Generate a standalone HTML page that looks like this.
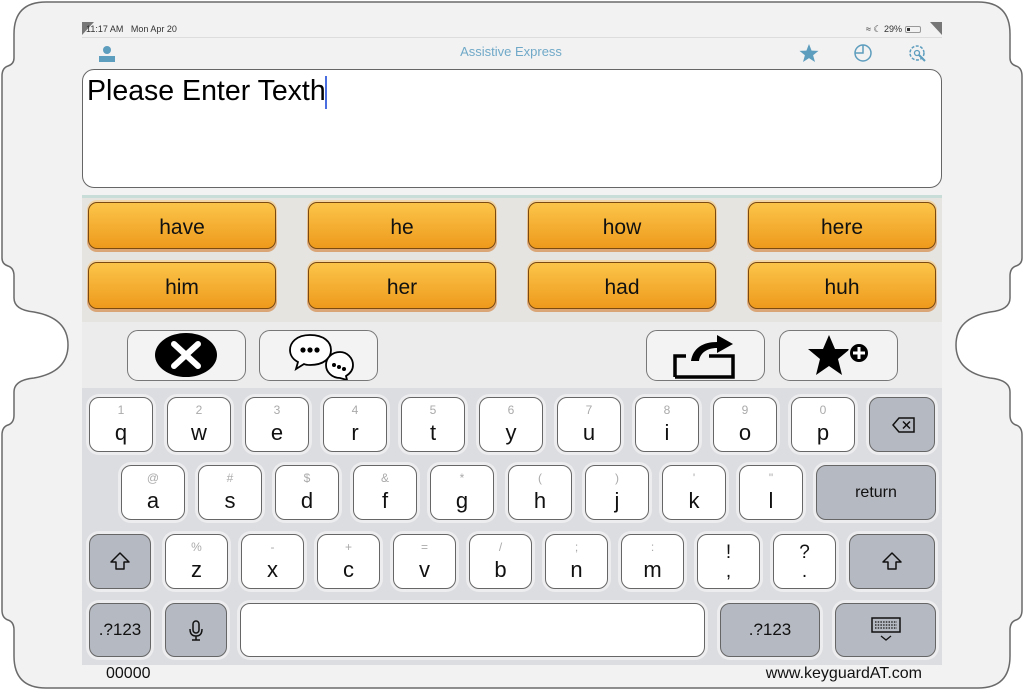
<!DOCTYPE html>
<html><head><meta charset="utf-8"><style>
*{margin:0;padding:0;box-sizing:border-box}
body{width:1024px;height:690px;background:#fff;position:relative;overflow:hidden;font-family:"Liberation Sans",sans-serif}
.a{position:absolute}
.wb{position:absolute;height:52px;width:190px;border-radius:10px;background:linear-gradient(#f3d8a8,#d9a476);}
.wb div{position:absolute;left:1px;top:2px;right:1px;height:47px;border:1.3px solid #7a4a10;border-radius:9px;background:linear-gradient(#fbc54a,#ee9a1c);font-size:21px;text-align:center;line-height:49px;color:#111}
.tb{position:absolute;top:330px;height:51px;width:119px;border:1.3px solid #777;border-radius:11px;background:#f3f3f4}
.k{position:absolute;border:1.3px solid #666;border-radius:10px;background:#fff;box-shadow:0 0 0 3px #ededef;text-align:center;color:#111}
.k .s{position:absolute;left:0;right:0;top:5px;font-size:12px;color:#aaa}
.k .m{position:absolute;left:0;right:0;top:22px;font-size:22px}
.g{background:#b5b9c1}
</style></head><body>
<svg class="a" style="left:0;top:0" width="1024" height="690">
<path d="M46 2 H978 Q1010 2 1010 34 V58 Q1010 64 1016 66 Q1022 68 1022 76 V258 Q1022 264 1016 266 Q1010 268 1010 276 V298 Q1010 310 990 312 Q956 318 956 345 Q956 372 990 378 Q1010 380 1010 392 V415 Q1010 423 1016 425 Q1022 427 1022 435 V610 Q1022 618 1016 620 Q1010 622 1010 630 V656 Q1010 688 978 688 H46 Q14 688 14 656 V630 Q14 622 8 620 Q2 618 2 610 V435 Q2 427 8 425 Q14 423 14 415 V392 Q14 380 34 378 Q68 372 68 345 Q68 318 34 312 Q14 310 14 298 V276 Q14 268 8 266 Q2 264 2 258 V76 Q2 68 8 66 Q14 64 14 58 V34 Q14 2 46 2 Z" fill="#f2f2f2" stroke="#6a6a6a" stroke-width="1.5"/>
<path d="M82 22 H94 L82 35 Z" fill="#777"/><path d="M942 22 H930 L942 35 Z" fill="#777"/>
<path d="M82 665 V652 L95 665 Z" fill="#888"/><path d="M942 665 V652 L929 665 Z" fill="#888"/>
</svg>
<div class="a" style="left:86px;top:24px;font-size:9px;color:#333">11:17 AM&nbsp;&nbsp; Mon Apr 20</div>
<div class="a" style="left:866px;top:24px;font-size:9px;color:#333">&#8776; ☾ 29% <span style="display:inline-block;width:16px;height:7px;border:1px solid #999;border-radius:2px;vertical-align:-1px;position:relative"><span style="position:absolute;left:1px;top:1px;width:3px;height:3px;background:#333"></span></span></div>
<div class="a" style="left:82px;top:37px;width:860px;height:1px;background:#ddd"></div>
<svg class="a" style="left:98px;top:44px" width="18" height="20"><circle cx="9" cy="6" r="4" fill="#5d9dbd"/><rect x="1" y="12" width="16" height="6" fill="#5d9dbd"/></svg>
<div class="a" style="left:0;width:1022px;top:44px;text-align:center;font-size:13px;color:#70a9c8">Assistive Express</div>
<svg class="a" style="left:798px;top:42px" width="130" height="24"><path d="M11 2 L13.6 8.6 L20.5 8.9 L15.1 13.2 L17 20 L11 16.1 L5 20 L6.9 13.2 L1.5 8.9 L8.4 8.6Z" fill="#5d9dbd"/><circle cx="65" cy="11" r="8" fill="none" stroke="#5d9dbd" stroke-width="1.5"/><path d="M65 3 V11 H57" fill="none" stroke="#5d9dbd" stroke-width="1.5"/><circle cx="119" cy="11" r="7" fill="none" stroke="#5d9dbd" stroke-width="1.5" stroke-dasharray="3 1.5"/><circle cx="119" cy="11" r="2.5" fill="none" stroke="#5d9dbd" stroke-width="1.3"/><path d="M121 13 L127 19" stroke="#5d9dbd" stroke-width="2"/></svg>
<div class="a" style="left:82px;top:69px;width:860px;height:119px;background:#fff;border:1.5px solid #666;border-radius:12px"></div>
<div class="a" style="left:87px;top:75px;font-size:28.5px;color:#000">Please Enter Texth</div>
<div class="a" style="left:325px;top:76px;width:1.5px;height:33px;background:#4a6ee0"></div>
<div class="a" style="left:82px;top:195px;width:860px;height:127px;background:#e5e4e0;border-top:3px solid #c8dcd8"></div>
<div class="wb" style="left:87px;top:200px"><div>have</div></div>
<div class="wb" style="left:307px;top:200px"><div>he</div></div>
<div class="wb" style="left:527px;top:200px"><div>how</div></div>
<div class="wb" style="left:747px;top:200px"><div>here</div></div>
<div class="wb" style="left:87px;top:260px"><div>him</div></div>
<div class="wb" style="left:307px;top:260px"><div>her</div></div>
<div class="wb" style="left:527px;top:260px"><div>had</div></div>
<div class="wb" style="left:747px;top:260px"><div>huh</div></div>
<div class="a" style="left:82px;top:322px;width:860px;height:66px;background:#ececed"></div>
<div class="tb" style="left:127px"><svg width="117" height="49"><ellipse cx="58" cy="24" rx="31" ry="22" fill="#000"/><path d="M46 13 L70 35 M70 13 L46 35" stroke="#fff" stroke-width="6" stroke-linecap="round"/></svg></div>
<div class="tb" style="left:259px"><svg width="117" height="49"><path d="M50 4 C36 4 30 12 30 19 C30 25 34 29 38 31 L36 38 L44 33 C46 34 48 34 50 34 C64 34 71 27 71 19 C71 11 64 4 50 4Z" fill="#fff" stroke="#000" stroke-width="1.8"/><circle cx="43" cy="19" r="2.6"/><circle cx="50" cy="19" r="2.6"/><circle cx="57" cy="19" r="2.6"/><path d="M80 21 C72 21 66 27 66 34 C66 41 72 47 80 47 L87 49 L86 45 C91 42 93 38 93 34 C93 27 87 21 80 21Z" fill="#fff" stroke="#000" stroke-width="1.8"/><circle cx="74" cy="34" r="2"/><circle cx="79" cy="36" r="2"/><circle cx="84" cy="38" r="2"/></svg></div>
<div class="tb" style="left:646px"><svg width="117" height="49"><path d="M28 46 V25 H39 M62 25 H86 V46 H28" fill="none" stroke="#000" stroke-width="3.5"/><path d="M44 30 C46 17 56 11 70 11 L70 4 L86 13 L70 22 L70 17 C60 17 53 22 52 30Z" fill="#000"/></svg></div>
<div class="tb" style="left:779px"><svg width="117" height="49"><path d="M49 4 L55 18 L70 18 L58 28 L62 44 L49 35 L36 44 L40 28 L28 18 L43 18Z" fill="#000"/><circle cx="79" cy="22" r="10" fill="#000" stroke="#f3f3f4" stroke-width="2"/><path d="M79 16 V28 M73 22 H85" stroke="#fff" stroke-width="3"/></svg></div>
<div class="a" style="left:82px;top:388px;width:860px;height:277px;background:#dcdde0"></div>
<div class="k" style="left:89px;top:397px;width:64px;height:55px"><span class="s">1</span><span class="m">q</span></div>
<div class="k" style="left:167px;top:397px;width:64px;height:55px"><span class="s">2</span><span class="m">w</span></div>
<div class="k" style="left:245px;top:397px;width:64px;height:55px"><span class="s">3</span><span class="m">e</span></div>
<div class="k" style="left:323px;top:397px;width:64px;height:55px"><span class="s">4</span><span class="m">r</span></div>
<div class="k" style="left:401px;top:397px;width:64px;height:55px"><span class="s">5</span><span class="m">t</span></div>
<div class="k" style="left:479px;top:397px;width:64px;height:55px"><span class="s">6</span><span class="m">y</span></div>
<div class="k" style="left:557px;top:397px;width:64px;height:55px"><span class="s">7</span><span class="m">u</span></div>
<div class="k" style="left:635px;top:397px;width:64px;height:55px"><span class="s">8</span><span class="m">i</span></div>
<div class="k" style="left:713px;top:397px;width:64px;height:55px"><span class="s">9</span><span class="m">o</span></div>
<div class="k" style="left:791px;top:397px;width:64px;height:55px"><span class="s">0</span><span class="m">p</span></div>
<div class="k g" style="left:869px;top:397px;width:66px;height:55px"><svg width="64" height="53"><path d="M23 27 L29 20 H44 V34 H29Z" fill="none" stroke="#111" stroke-width="1.5"/><path d="M33 23.5 L40 30.5 M40 23.5 L33 30.5" stroke="#111" stroke-width="1.5"/></svg></div>
<div class="k" style="left:121px;top:465px;width:64px;height:55px"><span class="s">@</span><span class="m">a</span></div>
<div class="k" style="left:198px;top:465px;width:64px;height:55px"><span class="s">#</span><span class="m">s</span></div>
<div class="k" style="left:275px;top:465px;width:64px;height:55px"><span class="s">$</span><span class="m">d</span></div>
<div class="k" style="left:353px;top:465px;width:64px;height:55px"><span class="s">&amp;</span><span class="m">f</span></div>
<div class="k" style="left:430px;top:465px;width:64px;height:55px"><span class="s">*</span><span class="m">g</span></div>
<div class="k" style="left:508px;top:465px;width:64px;height:55px"><span class="s">(</span><span class="m">h</span></div>
<div class="k" style="left:585px;top:465px;width:64px;height:55px"><span class="s">)</span><span class="m">j</span></div>
<div class="k" style="left:662px;top:465px;width:64px;height:55px"><span class="s">'</span><span class="m">k</span></div>
<div class="k" style="left:739px;top:465px;width:64px;height:55px"><span class="s">"</span><span class="m">l</span></div>
<div class="k g" style="left:816px;top:465px;width:120px;height:55px;font-size:16px;line-height:53px">return</div>
<div class="k g" style="left:89px;top:534px;width:62px;height:55px"><svg width="60" height="53"><path d="M30 18 L21 27 H26 V34 H34 V27 H39Z" fill="none" stroke="#111" stroke-width="1.5" stroke-linejoin="round"/></svg></div>
<div class="k" style="left:165px;top:534px;width:63px;height:55px"><span class="s">%</span><span class="m">z</span></div>
<div class="k" style="left:241px;top:534px;width:63px;height:55px"><span class="s">-</span><span class="m">x</span></div>
<div class="k" style="left:317px;top:534px;width:63px;height:55px"><span class="s">+</span><span class="m">c</span></div>
<div class="k" style="left:393px;top:534px;width:63px;height:55px"><span class="s">=</span><span class="m">v</span></div>
<div class="k" style="left:469px;top:534px;width:63px;height:55px"><span class="s">/</span><span class="m">b</span></div>
<div class="k" style="left:545px;top:534px;width:63px;height:55px"><span class="s">;</span><span class="m">n</span></div>
<div class="k" style="left:621px;top:534px;width:63px;height:55px"><span class="s">:</span><span class="m">m</span></div>
<div class="k" style="left:697px;top:534px;width:63px;height:55px"><span class="m" style="top:8px;font-size:19px;line-height:19px">!<br>,</span></div>
<div class="k" style="left:773px;top:534px;width:63px;height:55px"><span class="m" style="top:8px;font-size:19px;line-height:19px">?<br>.</span></div>
<div class="k g" style="left:849px;top:534px;width:86px;height:55px"><svg width="84" height="53"><path d="M42 18 L33 27 H38 V34 H46 V27 H51Z" fill="none" stroke="#111" stroke-width="1.5" stroke-linejoin="round"/></svg></div>
<div class="k g" style="left:89px;top:603px;width:62px;height:54px;font-size:17px;line-height:52px">.?123</div>
<div class="k g" style="left:165px;top:603px;width:62px;height:54px"><svg width="60" height="52"><rect x="27" y="17" width="6" height="12" rx="3" fill="none" stroke="#111" stroke-width="1.5"/><path d="M24 25 Q24 32 30 32 Q36 32 36 25 M30 32 V36 M26 36 H34" fill="none" stroke="#111" stroke-width="1.5"/></svg></div>
<div class="k" style="left:240px;top:603px;width:465px;height:54px"></div>
<div class="k g" style="left:720px;top:603px;width:100px;height:54px;font-size:17px;line-height:52px">.?123</div>
<div class="k g" style="left:835px;top:603px;width:101px;height:54px"><svg width="99" height="52"><rect x="36" y="14" width="28" height="14" fill="none" stroke="#111" stroke-width="1.5"/><path d="M39 18 H61 M39 21 H61 M39 24 H61" stroke="#111" stroke-width="1.2" stroke-dasharray="1.5 1.2"/><path d="M45 32 L50 36 L55 32" fill="none" stroke="#111" stroke-width="1.3"/></svg></div>
<div class="a" style="left:106px;top:665px;font-size:16px;color:#111">00000</div>
<div class="a" style="right:102px;top:665px;font-size:16px;color:#111">www.keyguardAT.com</div>
</body></html>
